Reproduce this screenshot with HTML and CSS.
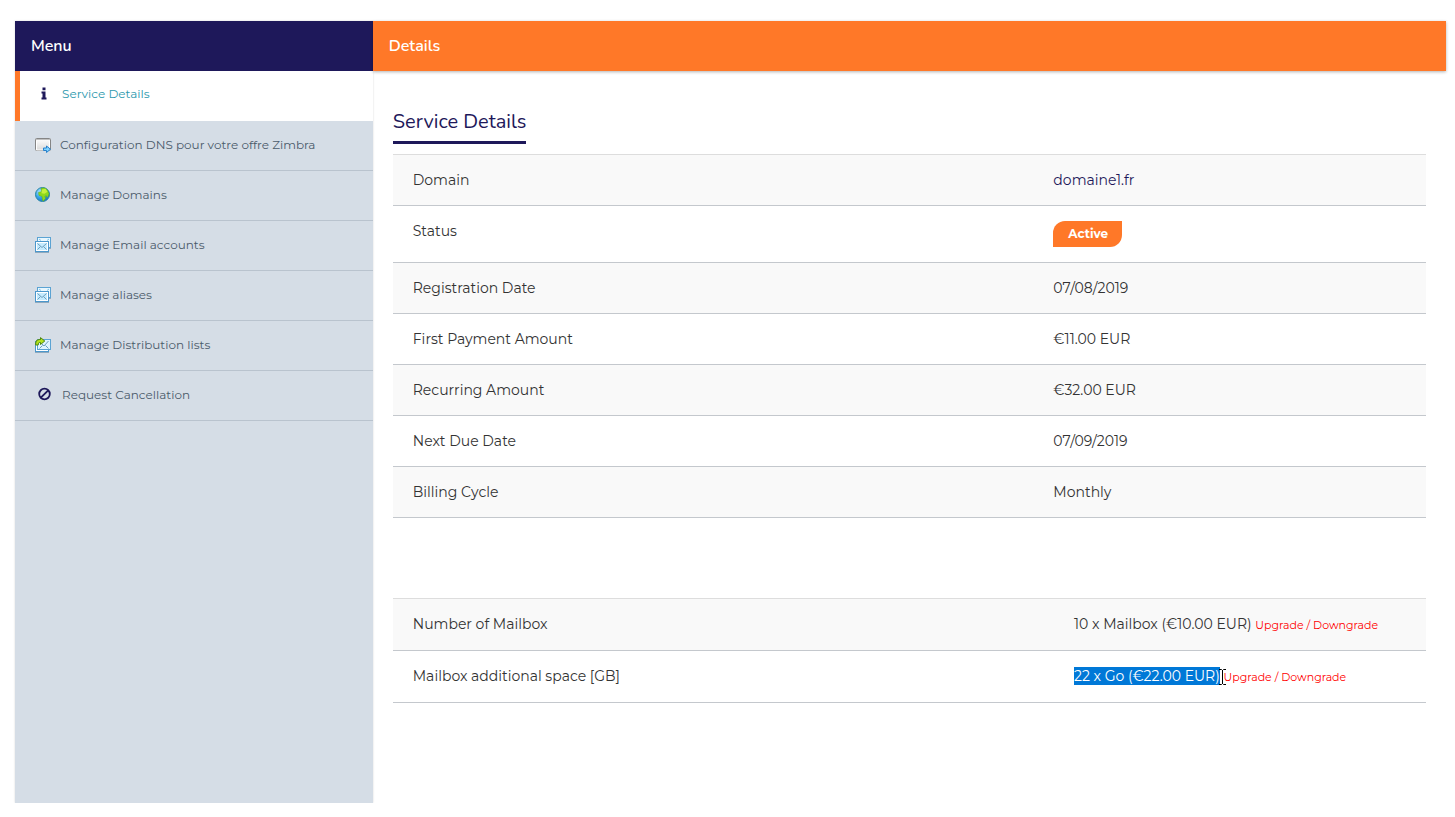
FILE: index.html
```html
<!DOCTYPE html>
<html lang="en">
<head>
<meta charset="utf-8">
<meta name="viewport" content="width=device-width, initial-scale=1">
<title>Service Details</title>
<link rel="stylesheet" href="styles.css">
</head>
<body>
<svg class="sprite" aria-hidden="true">
  <defs>
    <linearGradient id="paper" x1="0" y1="0" x2="0" y2="1"><stop offset="0" stop-color="#fff"/><stop offset="1" stop-color="#d9d9d9"/></linearGradient>
    <radialGradient id="sea" cx=".35" cy=".3" r=".8"><stop offset="0" stop-color="#b5e6ff"/><stop offset=".5" stop-color="#36a5ea"/><stop offset="1" stop-color="#1268c4"/></radialGradient>
    <symbol id="mails" viewBox="0 0 16 16">
      <path d="M0 15.500h14M14 11.500h2" stroke="#8fa9bd"/>
      <rect x="2.500" y=".5" width="13" height="10" fill="#e8f7ff" stroke="#5ba3d3"/>
      <path d="M4 2l2 1.500M14 2l-2 1.500" stroke="#7cc4ea" fill="none"/>
      <rect x=".5" y="4.500" width="13" height="10" fill="#fff" stroke="#4b97cc"/>
      <rect x="2" y="6" width="10" height="7" fill="#c4ebff"/>
      <path d="M2.500 6.500L7 10.500l4.500-4M2.500 12.500L5.500 9.500M11.500 12.500L8.500 9.500" stroke="#6c9fbd" fill="none"/>
    </symbol>
  </defs>
</svg>
<div class="layout">
  <aside class="sidebar">
    <h2 class="bar bar-menu">Menu</h2>
    <nav class="menu">
      <a class="item active" href="#"><svg class="icon icon-font" viewBox="0 0 16 16"><path d="M6.500 1.500h3v2.800h-3zM5.500 5.500h4v6h1v2h-5v-2h1v-4h-1z" fill="#1e185a"/></svg>Service Details</a>
      <a class="item" href="#"><svg class="icon" viewBox="0 0 16 16"><rect x=".5" y="1.500" width="15" height="12" rx="1" fill="url(#paper)" stroke="#858585"/><path d="M1 2.500h14" stroke="#c0c0c0"/><path d="M1.500 4v9h13V4" stroke="#fff" fill="none"/><path d="M8.500 11h3v-2l4 3.200-4 3.300v-2h-3z" fill="#7fd3ff" stroke="#2780cc"/></svg>Configuration DNS pour votre offre Zimbra</a>
      <a class="item" href="#"><svg class="icon" viewBox="0 0 16 16"><circle cx="7.500" cy="7.500" r="7" fill="url(#sea)" stroke="#2a87a5"/><path d="M6 1.500Q9-.2 12 2.500l2 4-1 3-1 1-1-2-1 1 .5 2-2 2.500L7.500 13.500l-.5-4L4 8.500l-.5-3 3-1z" fill="#8ed81c" stroke="#5aaa18" stroke-width=".5"/><path d="M7 2.500l3.500-.8 2 3-3 2-3-.5z" fill="#c6f03d"/></svg>Manage Domains</a>
      <a class="item" href="#"><svg class="icon"><use href="#mails"/></svg>Manage Email accounts</a>
      <a class="item" href="#"><svg class="icon"><use href="#mails"/></svg>Manage aliases</a>
      <a class="item" href="#"><svg class="icon" viewBox="0 0 16 16"><path d="M0 15.500h14" stroke="#8fa9bd"/><rect x=".5" y="4.500" width="13" height="10" fill="#fff" stroke="#4b97cc"/><rect x="2.500" y="2.500" width="13" height="10" fill="#dff5ff" stroke="#5ba3d3"/><path d="M4.500 11.500l3-3M13.500 11.500l-3-3M6 6l3 3 4.500-5" fill="none" stroke="#6c9fbd"/><path d="M.7 8V6q0-3.500 3.500-3.500h1.300V.6L9.800 4 5.500 7.500V5.500H4.300Q3.200 5.500 3.200 8z" fill="#b4e31b" stroke="#4c8513"/></svg>Manage Distribution lists</a>
      <a class="item" href="#"><svg class="icon icon-font" viewBox="0 0 16 16"><circle cx="8.500" cy="7" r="5.300" fill="none" stroke="#1e185a" stroke-width="1.800"/><path d="M4.800 10.700l7.400-7.400" stroke="#1e185a" stroke-width="1.800"/></svg>Request Cancellation</a>
    </nav>
  </aside>
  <main class="main">
    <h2 class="bar bar-details">Details</h2>
    <section class="content">
      <h1 class="title">Service Details</h1>
      <table class="details">
        <tbody>
          <tr><th scope="row">Domain</th><td><a class="domain" href="#">domaine1.fr</a></td></tr>
          <tr><th scope="row">Status</th><td><span class="badge">Active</span></td></tr>
          <tr><th scope="row">Registration Date</th><td>07/08/2019</td></tr>
          <tr><th scope="row">First Payment Amount</th><td>€11.00 EUR</td></tr>
          <tr><th scope="row">Recurring Amount</th><td>€32.00 EUR</td></tr>
          <tr><th scope="row">Next Due Date</th><td>07/09/2019</td></tr>
          <tr><th scope="row">Billing Cycle</th><td>Monthly</td></tr>
        </tbody>
      </table>
      <table class="details options">
        <tbody>
          <tr><th scope="row">Number of Mailbox</th><td>10 x Mailbox (€10.00 EUR) <a class="upgrade" href="#">Upgrade / Downgrade</a></td></tr>
          <tr><th scope="row">Mailbox additional space [GB]</th><td><span class="selected">22 x Go (€22.00 EUR)<svg class="cursor" viewBox="0 0 7 16"><path d="M0 .5h2.500l1 1 1-1H7M0 15.500h2.500l1-1 1 1H7M3.500 1v14" fill="none" stroke="#000"/></svg></span> <a class="upgrade" href="#">Upgrade / Downgrade</a></td></tr>
        </tbody>
      </table>
    </section>
  </main>
</div>
</body>
</html>
```
FILE: styles.css
```css
* { box-sizing: border-box; }
body {
  margin: 0;
  background: #fff;
  color: #333;
  font-family: Montserrat, Inter, "Open Sans", sans-serif;
  font-size: 14px;
  line-height: 20px;
}
a { color: inherit; text-decoration: none; }
.sprite { position: absolute; width: 0; height: 0; }
.layout {
  display: grid;
  grid-template-columns: 1fr 3fr;
  min-height: calc(100vh - 14px);
  padding: 21px 9px 0 15px;
}
.sidebar { background: #d5dde6; box-shadow: 0 0 2px rgba(0, 0, 0, .15); }
.bar {
  margin: 0;
  padding: 15px 16px;
  color: #fff;
  font-family: Nunito, "Open Sans", sans-serif;
  font-size: 16px;
  font-weight: 600;
  line-height: 20px;
}
.bar-menu { background: #1e185a; }
.bar-details { background: #ff7828; box-shadow: 0 1px 3px rgba(0, 0, 0, .3); }
.menu { display: flex; flex-direction: column; }
.item {
  display: flex;
  align-items: center;
  gap: 9px;
  height: 50px;
  padding: 0 20px 1px;
  border-bottom: 1px solid #b9c3ce;
  color: #4b5b6b;
  font-size: 12px;
}
.item.active {
  padding: 0 20px 4px 15px;
  border-bottom: 0;
  border-left: 5px solid #ff7828;
  background: #fff;
  color: #2b98ad;
}
.icon { flex: none; width: 16px; height: 16px; }
.icon-font { margin: 0 1px; }
.content { padding: 38px 20px 0; }
.title {
  width: fit-content;
  margin: 0 0 10px;
  padding-bottom: 7px;
  border-bottom: 3px solid #1e185a;
  color: #1e185a;
  font-family: Nunito, "Open Sans", sans-serif;
  font-size: 20px;
  font-weight: 400;
  line-height: 25px;
}
.details {
  width: 100%;
  border-collapse: collapse;
  table-layout: fixed;
  border-top: 1px solid #ddd;
}
.details tr { border-bottom: 1px solid #c4c8cd; }
.details tr:nth-child(odd) { background: #f9f9f9; }
.details th, .details td {
  padding: 15px 20px;
  font-weight: 400;
  text-align: left;
  vertical-align: top;
}
.details th { width: 62%; }
.options { margin-top: 80px; }
.options th { width: 64%; }
.domain { color: #1e185a; }
.badge {
  display: block;
  width: fit-content;
  padding: 3px 14px 3px 15px;
  border-radius: 12px 0;
  background: #ff7828;
  color: #fff;
  font-size: 12px;
  font-weight: 700;
}
.upgrade { color: #f00; font-size: 11px; }
.selected { position: relative; background: #0078d7; color: #fff; }
.cursor { position: absolute; right: -6px; top: 2px; width: 7px; height: 16px; }
```
